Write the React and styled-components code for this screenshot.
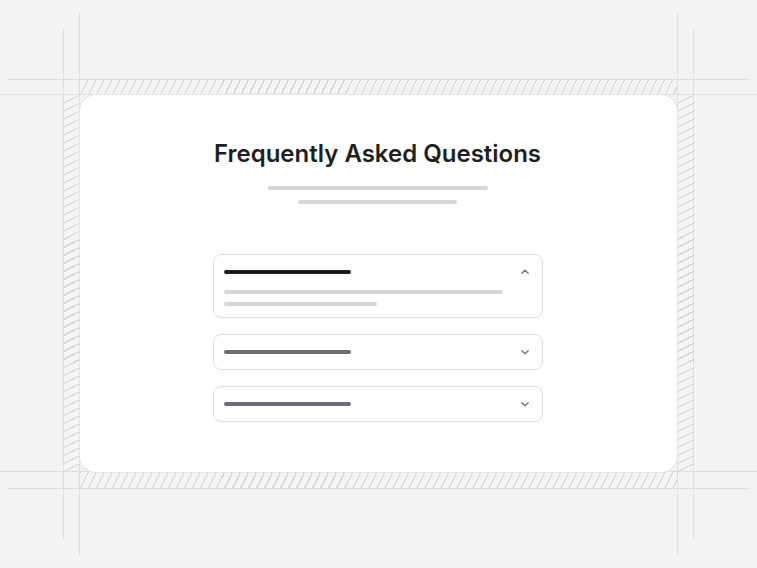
import styled, { createGlobalStyle } from 'styled-components';

const GlobalStyle = createGlobalStyle`
  html, body {
    margin: 0;
    padding: 0;
    background: #f3f3f3;
  }
  body {
    font-family: 'Inter', 'Liberation Sans', sans-serif;
  }
`;

const Page = styled.main`
  width: 757px;
  height: 568px;
  display: flex;
  justify-content: center;
  align-items: flex-start;
  padding-top: 79px;
  box-sizing: border-box;
  overflow: hidden;
`;

const Frame = styled.div`
  position: relative;
  display: grid;
  grid-template-columns: 17px 597px 17px;
  grid-template-rows: 16px 377px 17px;
`;

const Corner = styled.div``;

const Band = styled.div`
  background-color: #f4f4f4;
  background-image: repeating-linear-gradient(
    ${(p) => (p.$vertical ? '153.4deg' : '116.6deg')},
    #d0d0d4 0,
    #d0d0d4 1px,
    transparent 1px,
    transparent 7.16px
  );
`;

const GuideV = styled.span`
  position: absolute;
  width: 1px;
  background: #dedee1;
  top: -${(p) => p.$ext}px;
  bottom: -${(p) => p.$ext}px;
  ${(p) => p.$side}: ${(p) => p.$offset}px;
  pointer-events: none;
`;

const GuideH = styled.span`
  position: absolute;
  height: 1px;
  background: #dedee1;
  left: -${(p) => p.$ext}px;
  right: -${(p) => p.$ext}px;
  ${(p) => p.$side}: ${(p) => p.$offset}px;
  pointer-events: none;
`;

const Card = styled.section`
  position: relative;
  z-index: 1;
  background: #ffffff;
  border-radius: 16px;
  box-shadow: 0 0 0 1px #e4e4e6;
  display: flex;
  flex-direction: column;
  align-items: center;
  padding: 44px 2px 0 0;
  box-sizing: border-box;
`;

const Title = styled.h1`
  margin: 0;
  font-family: 'Inter', 'Liberation Sans', sans-serif;
  font-size: 24px;
  line-height: 30px;
  font-weight: 600;
  color: #1f1f22;
  letter-spacing: 0;
`;

const SubLine = styled.div`
  width: ${(p) => p.$w}px;
  height: 4px;
  border-radius: 2px;
  background: #d6d6d9;
  margin-top: ${(p) => p.$mt}px;
`;

const List = styled.div`
  width: 330px;
  margin-top: 50px;
  display: flex;
  flex-direction: column;
  gap: 16px;
`;

const Item = styled.div`
  border: 1px solid #dedee1;
  border-radius: 8px;
  background: #fff;
`;

const Header = styled.div`
  height: 34px;
  padding: 0 12px 0 10px;
  display: flex;
  align-items: center;
  justify-content: space-between;
`;

const Bar = styled.div`
  width: ${(p) => p.$w}px;
  height: 4px;
  border-radius: 2px;
  background: ${(p) => p.$color};
`;

const Body = styled.div`
  padding: 1px 10px 11px;
  display: flex;
  flex-direction: column;
  gap: 8px;
`;

const Chevron = ({ up }) => (
  <svg width="10" height="10" viewBox="0 0 10 10" fill="none">
    <path
      d={up ? 'M1.8 6.3 L5 3.2 L8.2 6.3' : 'M1.8 3.7 L5 6.8 L8.2 3.7'}
      stroke="#76767c"
      strokeWidth="1.4"
      strokeLinecap="round"
      strokeLinejoin="round"
    />
  </svg>
);

const items = [
  { open: true },
  { open: false },
  { open: false },
];

export default function App() {
  return (
    <>
      <GlobalStyle />
      <Page>
        <Frame>
          <GuideV $side="left" $offset={0} $ext={51} />
          <GuideV $side="left" $offset={16} $ext={67} />
          <GuideV $side="right" $offset={16} $ext={67} />
          <GuideV $side="right" $offset={0} $ext={51} />
          <GuideH $side="top" $offset={0} $ext={56} />
          <GuideH $side="top" $offset={15} $ext={63} />
          <GuideH $side="bottom" $offset={17} $ext={63} />
          <GuideH $side="bottom" $offset={0} $ext={56} />

          <Corner />
          <Band />
          <Corner />
          <Band $vertical />
          <Card>
            <Title>Frequently Asked Questions</Title>
            <SubLine $w={220} $mt={17} />
            <SubLine $w={159} $mt={10} />
            <List>
              {items.map((item, i) => (
                <Item key={i}>
                  <Header>
                    <Bar $w={127} $color={item.open ? '#1c1c1f' : '#6c6c75'} />
                    <Chevron up={item.open} />
                  </Header>
                  {item.open && (
                    <Body>
                      <Bar $w={279} $color="#d6d6d9" />
                      <Bar $w={153} $color="#d6d6d9" />
                    </Body>
                  )}
                </Item>
              ))}
            </List>
          </Card>
          <Band $vertical />
          <Corner />
          <Band />
          <Corner />
        </Frame>
      </Page>
    </>
  );
}
